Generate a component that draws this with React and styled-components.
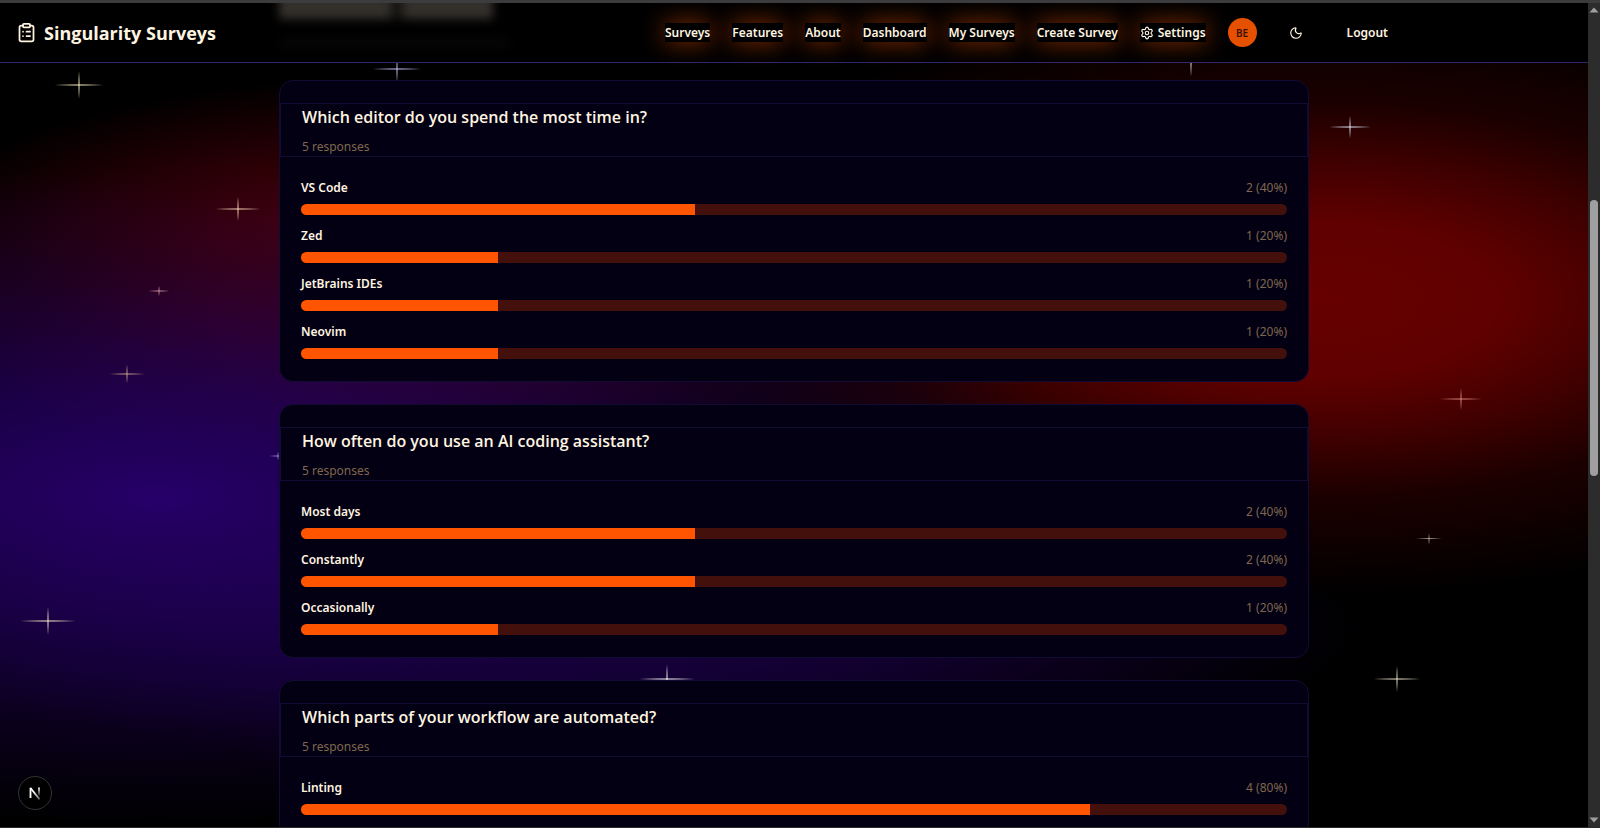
import React from "react";
import styled, { createGlobalStyle } from "styled-components";
import { ClipboardList, Moon, Settings } from "lucide-react";

const navLinks = ["Surveys", "Features", "About", "Dashboard", "My Surveys", "Create Survey"];

const questions = [
  {
    title: "Which editor do you spend the most time in?",
    responses: 5,
    options: [
      { label: "VS Code", votes: 2 },
      { label: "Zed", votes: 1 },
      { label: "JetBrains IDEs", votes: 1 },
      { label: "Neovim", votes: 1 },
    ],
  },
  {
    title: "How often do you use an AI coding assistant?",
    responses: 5,
    options: [
      { label: "Most days", votes: 2 },
      { label: "Constantly", votes: 2 },
      { label: "Occasionally", votes: 1 },
    ],
  },
  {
    title: "Which parts of your workflow are automated?",
    responses: 5,
    options: [{ label: "Linting", votes: 4 }],
  },
];

// x, y in percent of the sky, w/h are the lengths of the two rays
const stars = [
  { x: 5, y: 10, w: 56, h: 32, color: "#fff3c4" },
  { x: 25, y: 8, w: 56, h: 32, color: "#c9c4ff" },
  { x: 75, y: 7, w: 56, h: 36, color: "#fff1e0" },
  { x: 85, y: 15, w: 48, h: 26, color: "#e2ecff" },
  { x: 15, y: 25, w: 52, h: 28, color: "#ffd9b8" },
  { x: 10, y: 35, w: 24, h: 12, color: "#c98a9c" },
  { x: 8, y: 45, w: 40, h: 22, color: "#c9a08c" },
  { x: 17.5, y: 55, w: 20, h: 10, color: "#8f7fd0" },
  { x: 3, y: 75, w: 64, h: 32, color: "#fff0c8" },
  { x: 42, y: 82, w: 64, h: 34, color: "#ffffff" },
  { x: 92, y: 48, w: 48, h: 26, color: "#d98a7c" },
  { x: 90, y: 65, w: 26, h: 13, color: "#a8958c" },
  { x: 88, y: 82, w: 54, h: 30, color: "#f2e6d0" },
];

const App = () => {
  return (
    <Window>
      <GlobalStyle />
      <Screen>
        <Sky aria-hidden="true">
          {stars.map((star) => (
            <Star
              key={star.x + "-" + star.y}
              $w={star.w}
              $h={star.h}
              $color={star.color}
              style={{ left: `${star.x}%`, top: `${star.y}%` }}
            />
          ))}
        </Sky>
        <Header>
          <Blurred aria-hidden="true" />
          <HeaderInner>
            <Brand href="#">
              <ClipboardList size={21} />
              Singularity Surveys
            </Brand>
            <Nav>
              {navLinks.map((link) => (
                <NavLink href="#" key={link}>
                  {link}
                </NavLink>
              ))}
              <NavLink href="#">
                <Settings size={14} />
                Settings
              </NavLink>
              <Avatar type="button">BE</Avatar>
              <IconButton type="button" aria-label="Toggle theme">
                <Moon size={14} />
              </IconButton>
              <LogoutBtn type="button">Logout</LogoutBtn>
            </Nav>
          </HeaderInner>
        </Header>
        <Results>
          {questions.map((question) => (
            <Card key={question.title}>
              <CardHeader>
                <h2>{question.title}</h2>
                <p>{question.responses} responses</p>
              </CardHeader>
              <Options>
                {question.options.map((option) => {
                  const percent = Math.round((option.votes / question.responses) * 100);
                  return (
                    <li key={option.label}>
                      <OptionText>
                        <strong>{option.label}</strong>
                        <span>
                          {option.votes} ({percent}%)
                        </span>
                      </OptionText>
                      <Track>
                        <Fill style={{ width: `${percent}%` }} />
                      </Track>
                    </li>
                  );
                })}
              </Options>
            </Card>
          ))}
        </Results>
        <DevBadge type="button" aria-label="Open Next.js Dev Tools">
          <NextMark />
        </DevBadge>
      </Screen>
      <Scrollbar aria-hidden="true">
        <Arrow viewBox="0 0 10 6">
          <path d="M5 0.5 9.5 5.5H0.5Z" />
        </Arrow>
        <Rail>
          <Thumb />
        </Rail>
        <Arrow viewBox="0 0 10 6">
          <path d="M5 5.5 9.5 0.5H0.5Z" />
        </Arrow>
      </Scrollbar>
    </Window>
  );
};

export default App;

const NextMark = () => (
  <svg width="14" height="14" viewBox="0 0 14 14" fill="none">
    <defs>
      <linearGradient id="stem" x1="0" y1="1" x2="0" y2="11" gradientUnits="userSpaceOnUse">
        <stop stopColor="#fff" />
        <stop offset="1" stopColor="#fff" stopOpacity="0" />
      </linearGradient>
      <linearGradient id="slash" x1="6" y1="6" x2="12" y2="14" gradientUnits="userSpaceOnUse">
        <stop stopColor="#fff" />
        <stop offset="1" stopColor="#fff" stopOpacity="0.3" />
      </linearGradient>
    </defs>
    <path d="M2.5 12V2" stroke="#fff" strokeWidth="1.8" />
    <path d="M2.3 1.8 11.6 13.4" stroke="url(#slash)" strokeWidth="1.8" />
    <path d="M11 1.5V9.5" stroke="url(#stem)" strokeWidth="1.8" />
  </svg>
);

const GlobalStyle = createGlobalStyle`
  * {
    box-sizing: border-box;
  }

  body {
    margin: 0;
    background: #000;
    color: #fff4e0;
    font-family: "Noto Sans", "Open Sans", sans-serif;
    font-size: 12px;
    overflow: hidden;
  }

  h2, p, ul {
    margin: 0;
    padding: 0;
  }

  button {
    font: inherit;
    color: inherit;
    border: 0;
    padding: 0;
    background: transparent;
    cursor: pointer;
  }
`;

const Window = styled.div`
  display: grid;
  grid-template-columns: minmax(0, 1fr) 12px;
  height: 100vh;
  border-top: 3px solid #3c3c3e;
  border-bottom: 1px solid #2a2a2c;
`;

const Screen = styled.div`
  position: relative;
  overflow: hidden;
`;

const Sky = styled.div`
  position: absolute;
  inset: 0;
  background:
    radial-gradient(ellipse 58% 40% at 10% 60%, rgba(40, 0, 110, 0.95), rgba(34, 0, 92, 0.75) 35%, rgba(22, 0, 60, 0.45) 70%, transparent),
    radial-gradient(ellipse 46% 18% at 40% 76%, rgba(26, 0, 68, 0.9), rgba(24, 0, 64, 0.7) 40%, transparent),
    radial-gradient(ellipse 44% 36% at 83% 36%, #660000, #600000 26%, #440000 44%, #1c0000 66%, transparent),
    radial-gradient(ellipse 32% 24% at 24% 33%, #560006, #440006 35%, #200004 70%, transparent),
    #000;
`;

const Star = styled.i`
  position: absolute;
  width: ${(props) => props.$w}px;
  height: ${(props) => props.$h}px;
  transform: translate(-50%, -50%);
  background:
    radial-gradient(closest-side, ${(props) => props.$color}, transparent) center / 100% 2px no-repeat,
    radial-gradient(closest-side, ${(props) => props.$color}, transparent) center / 2px 100% no-repeat;
`;

const Header = styled.header`
  position: relative;
  height: 60px;
  background: #000;
  border-bottom: 1px solid #30266c;
`;

/* page heading showing through the frosted header */
const Blurred = styled.div`
  position: absolute;
  top: 0;
  left: 50%;
  width: 1050px;
  height: 59px;
  overflow: hidden;
  transform: translateX(-50%);

  &::before,
  &::after {
    content: "";
    position: absolute;
    filter: blur(5px);
  }

  &::before {
    left: 10px;
    top: -10px;
    width: 214px;
    height: 26px;
    background: linear-gradient(90deg, #33302c 110px, #141210 114px 122px, #33302c 126px);
  }

  &::after {
    left: 10px;
    top: 36px;
    width: 230px;
    height: 8px;
    background: #080706;
  }
`;

const HeaderInner = styled.div`
  position: relative;
  display: flex;
  align-items: center;
  justify-content: space-between;
  max-width: 1404px;
  height: 100%;
  padding: 0 16px;
`;

const Brand = styled.a`
  display: flex;
  align-items: center;
  gap: 7px;
  color: inherit;
  font-family: "Open Sans", "Noto Sans", sans-serif;
  font-size: 18px;
  font-weight: 700;
  line-height: 26px;
  text-decoration: none;
`;

const Nav = styled.nav`
  display: flex;
  align-items: center;
  gap: 22px;
  font-weight: 600;
`;

const NavLink = styled.a`
  position: relative;
  display: flex;
  align-items: center;
  gap: 4px;
  height: 19px;
  color: inherit;
  background: #000;
  line-height: 19px;
  text-decoration: none;
  white-space: nowrap;

  &::before {
    content: "";
    position: absolute;
    inset: 0;
    box-shadow: 0 0 24px rgba(255, 85, 0, 0.55);
  }
`;

const Avatar = styled.button`
  width: 29px;
  height: 29px;
  border-radius: 50%;
  background: #e65100;
  color: #3a1000;
  font-size: 10px;
  font-weight: 600;
`;

const IconButton = styled.button`
  display: grid;
  place-items: center;
  width: 34px;
  height: 34px;
`;

const LogoutBtn = styled.button`
  padding-left: 12px;
  font-weight: 600;
`;

const Results = styled.main`
  position: relative;
  display: flex;
  flex-direction: column;
  gap: 22px;
  max-width: 1030px;
  margin: 17px auto 0;
`;

const Card = styled.section`
  padding-top: 22px;
  background: #020012;
  border: 1px solid #120c34;
  border-radius: 14px;
`;

const CardHeader = styled.header`
  display: flex;
  flex-direction: column;
  gap: 8px;
  padding: 0 21px;
  border: 1px solid #120c34;

  h2 {
    font-family: "Open Sans", "Noto Sans", sans-serif;
    font-size: 16px;
    font-weight: 600;
    line-height: 26px;
  }

  p {
    color: #80674f;
    line-height: 18px;
  }
`;

const Options = styled.ul`
  display: flex;
  flex-direction: column;
  gap: 10px;
  padding: 20px 21px 22px;
  list-style: none;
`;

const OptionText = styled.div`
  display: flex;
  justify-content: space-between;
  margin-bottom: 5px;
  line-height: 22px;

  strong {
    font-weight: 600;
  }

  span {
    color: #80674f;
  }
`;

const Track = styled.div`
  height: 11px;
  border-radius: 6px;
  background: #44100c;
  overflow: hidden;
`;

const Fill = styled.div`
  height: 100%;
  background: #ff5500;
`;

const DevBadge = styled.button`
  position: absolute;
  left: 18px;
  bottom: 17px;
  display: grid;
  place-items: center;
  width: 34px;
  height: 34px;
  border: 1px solid #333;
  border-radius: 50%;
  background: #000;
`;

const Scrollbar = styled.div`
  display: flex;
  flex-direction: column;
  align-items: center;
  padding: 4px 0;
  background: #2c2c2c;
`;

const Arrow = styled.svg`
  width: 10px;
  height: 6px;
  fill: #9f9f9f;
`;

const Rail = styled.div`
  flex: 1;
  padding-top: 187px;
`;

const Thumb = styled.div`
  width: 8px;
  height: 276px;
  border-radius: 4px;
  background: #9f9f9f;
`;
